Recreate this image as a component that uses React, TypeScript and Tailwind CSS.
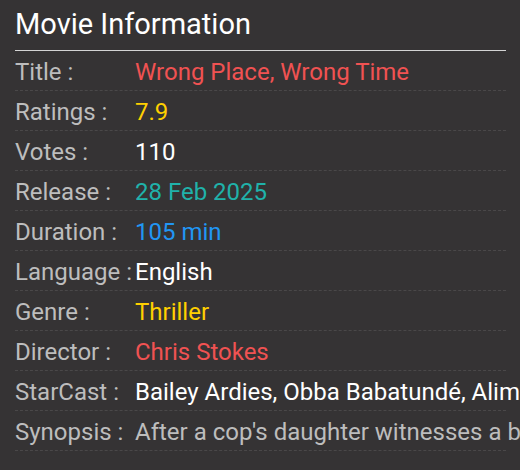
import React from "react";

const rows: { label: string; value: string; color: string }[] = [
  { label: "Title :", value: "Wrong Place, Wrong Time", color: "text-[#f05252]" },
  { label: "Ratings :", value: "7.9", color: "text-[#ffd000]" },
  { label: "Votes :", value: "110", color: "text-white" },
  { label: "Release :", value: "28 Feb 2025", color: "text-[#20b2aa]" },
  { label: "Duration :", value: "105 min", color: "text-[#2196f3]" },
  { label: "Language :", value: "English", color: "text-white" },
  { label: "Genre :", value: "Thriller", color: "text-[#ffd000]" },
  { label: "Director :", value: "Chris Stokes", color: "text-[#f05252]" },
  { label: "StarCast :", value: "Bailey Ardies, Obba Babatundé, Alimi Ballard, Chris Stokes", color: "text-white" },
  { label: "Synopsis :", value: "After a cop's daughter witnesses a brutal murder, she becomes the target", color: "text-[#bdbdbd]" },
];

export default function App() {
  return (
    <div
      className="w-[520px] h-[470px] bg-[#353334] overflow-hidden pl-[15px] pr-[14px]"
      style={{ fontFamily: "Roboto, 'Noto Sans', sans-serif" }}
    >
      <div className="pt-[6px] pb-[8px] border-b border-[#d4d4d4] text-[29px] leading-[36px] text-white">
        Movie Information
      </div>
      {rows.map((r) => (
        <div
          key={r.label}
          className="flex items-center h-10 pt-[2px] border-b border-dashed border-[#4a4849] text-[24px] whitespace-nowrap"
        >
          <div className="w-[120px] shrink-0 text-[#bdbdbd]">{r.label}</div>
          <div className={r.color}>{r.value}</div>
        </div>
      ))}
    </div>
  );
}
